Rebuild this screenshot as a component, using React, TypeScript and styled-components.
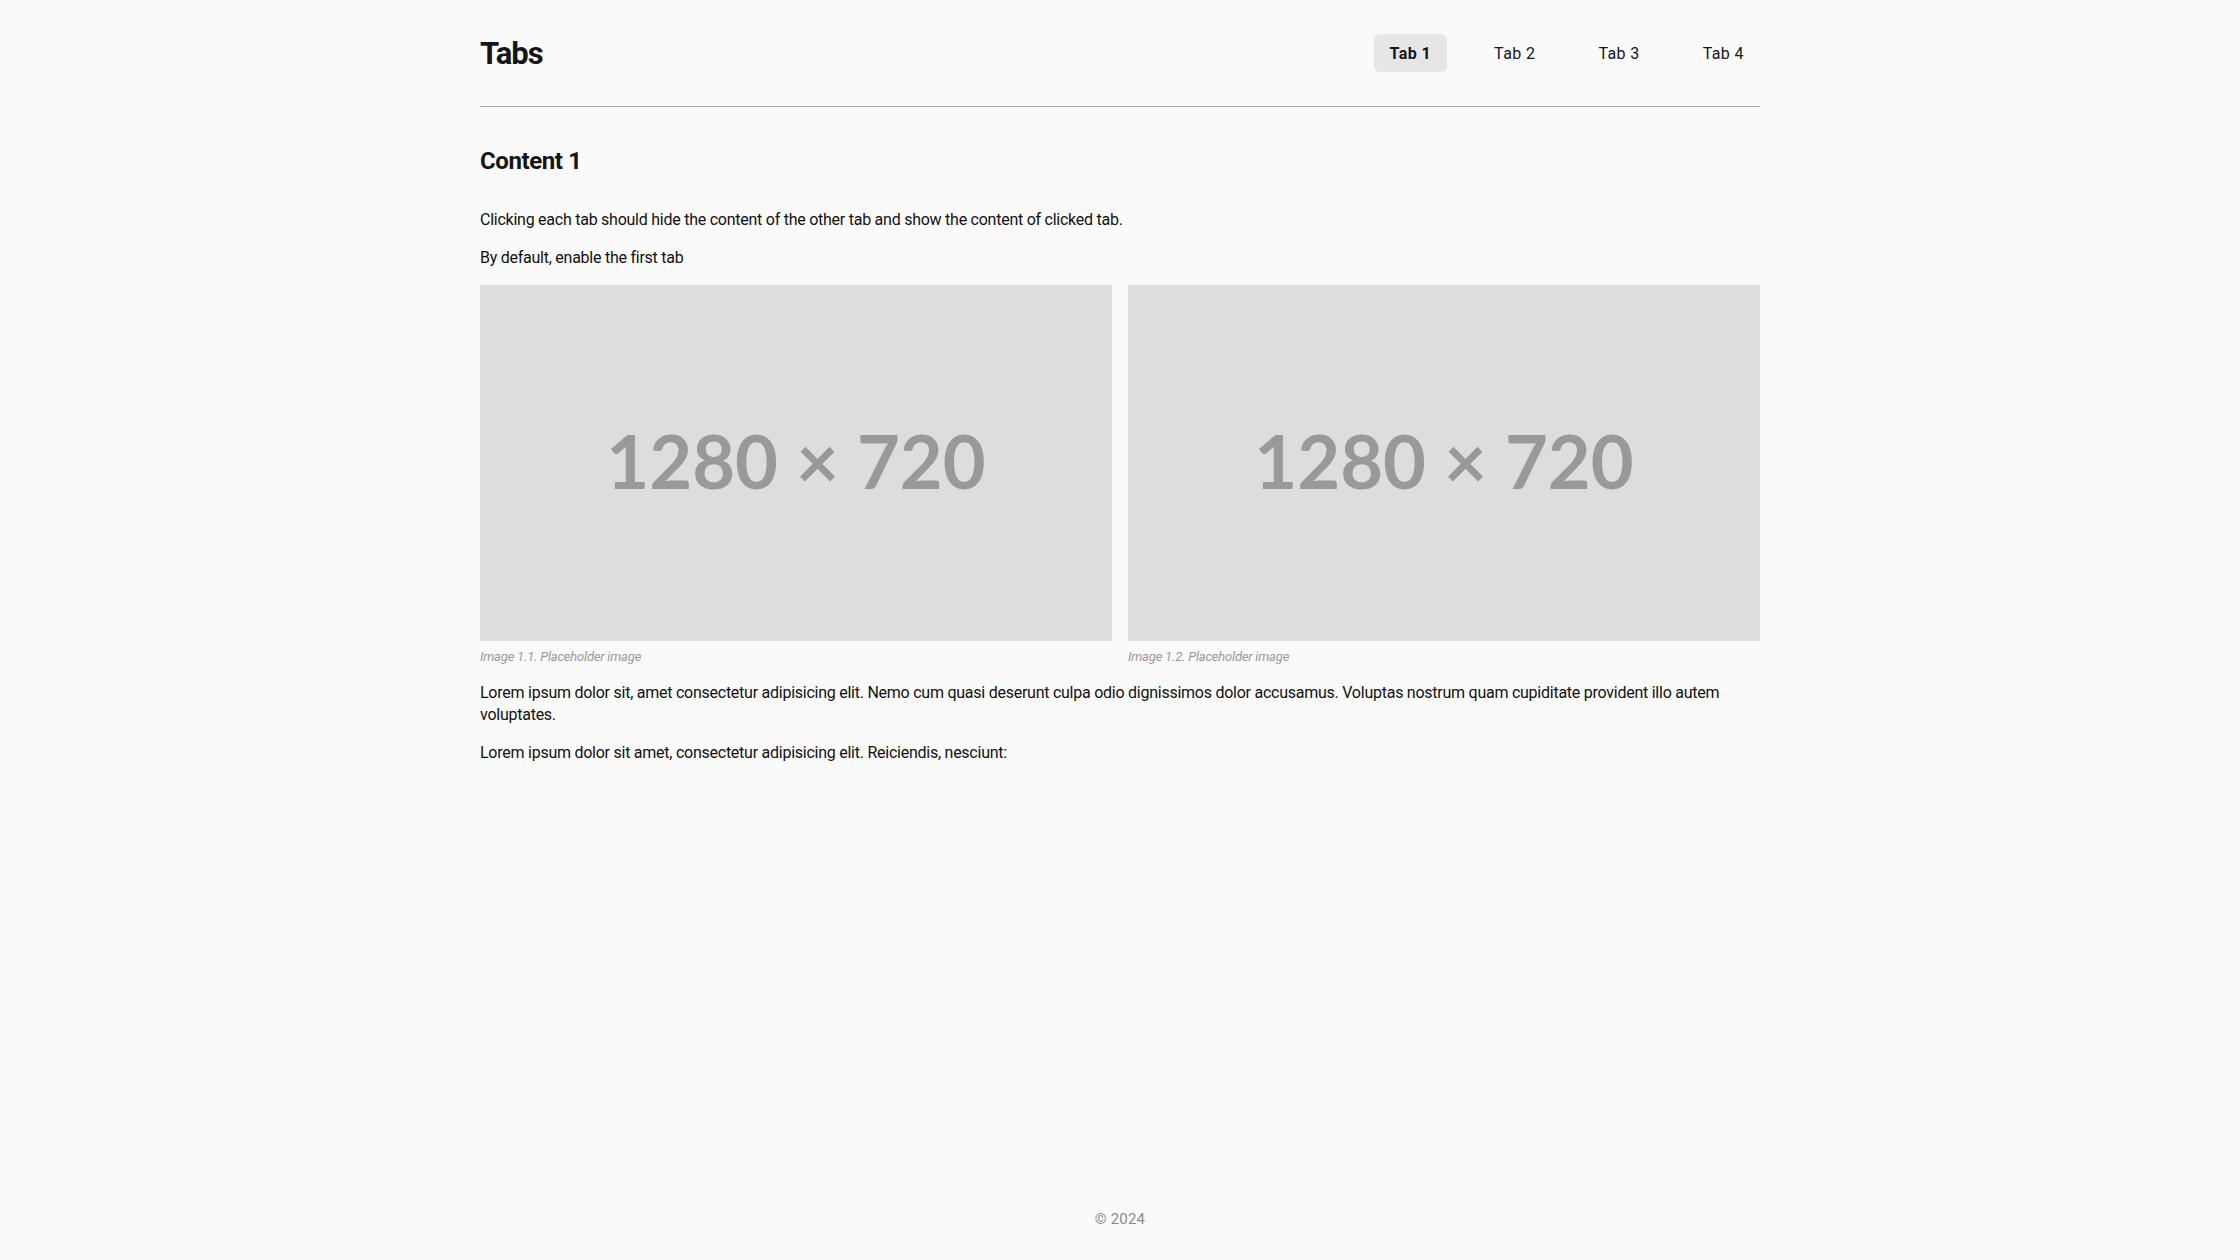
import React, { useState } from "react";
import styled, { createGlobalStyle } from "styled-components";

const GlobalStyle = createGlobalStyle`
  html, body {
    margin: 0;
    padding: 0;
    background: #fafafa;
  }
  body {
    font-family: Roboto, "Noto Sans", Arial, sans-serif;
    color: #111111;
  }
  * { box-sizing: border-box; }
`;

const Page = styled.div`
  min-height: 100vh;
  display: flex;
  flex-direction: column;
`;

const Container = styled.div`
  width: 1280px;
  margin: 0 auto;
`;

const Header = styled.header`
  display: flex;
  align-items: center;
  justify-content: space-between;
  padding: 34px 0;
  border-bottom: 1px solid #a8a8a8;
`;

const Title = styled.h1`
  margin: 0;
  font-size: 31px;
  line-height: 38px;
  font-weight: 700;
  letter-spacing: -1.1px;
  color: #151515;
  transform: translateY(1px);
`;

const TabList = styled.nav`
  display: flex;
  gap: 31px;
`;

const TabButton = styled.button<{ $active: boolean }>`
  height: 38px;
  padding: 0 16px;
  border: none;
  border-radius: 6px;
  background: ${(p) => (p.$active ? "#e6e6e6" : "transparent")};
  font-family: Roboto, "Noto Sans", Arial, sans-serif;
  font-size: 16px;
  letter-spacing: 0.4px;
  font-weight: ${(p) => (p.$active ? 700 : 400)};
  color: #151515;
  cursor: pointer;
`;

const Main = styled.main`
  flex: 1;
`;

const Heading = styled.h2`
  margin: 39px 0 33px;
  font-size: 24px;
  line-height: 30px;
  font-weight: 700;
  letter-spacing: -0.4px;
  color: #151515;
`;

const Text = styled.p`
  margin: 0 0 16px;
  font-size: 16px;
  line-height: 22px;
  letter-spacing: -0.25px;
`;

const Gallery = styled.div`
  display: grid;
  grid-template-columns: 1fr 1fr;
  gap: 16px;
  margin: 3px 0 16px;
`;

const Figure = styled.figure`
  margin: 0;
  display: flex;
  flex-direction: column;
  gap: 7px;
`;

const Placeholder = styled.div`
  height: 356px;
  padding-bottom: 5px;
  background: #dddddd;
  display: flex;
  align-items: center;
  justify-content: center;
  font-family: Lato, sans-serif;
  font-weight: 700;
  font-size: 74px;
  color: #999999;
`;

const Caption = styled.figcaption`
  font-size: 13px;
  line-height: 18px;
  font-style: italic;
  color: #999999;
  letter-spacing: -0.2px;
`;

const Footer = styled.footer`
  padding: 24px 0 31px;
  text-align: center;
  font-size: 15px;
  line-height: 20px;
  letter-spacing: 0.2px;
  color: #8a8a8a;
`;

const tabs = ["Tab 1", "Tab 2", "Tab 3", "Tab 4"];

export default function App() {
  const [active, setActive] = useState(0);
  return (
    <Page>
      <GlobalStyle />
      <Container>
        <Header>
          <Title>Tabs</Title>
          <TabList>
            {tabs.map((t, i) => (
              <TabButton key={t} $active={i === active} onClick={() => setActive(i)}>
                {t}
              </TabButton>
            ))}
          </TabList>
        </Header>
      </Container>
      <Main>
        <Container>
          <Heading>Content {active + 1}</Heading>
          <Text>Clicking each tab should hide the content of the other tab and show the content of clicked tab.</Text>
          <Text>By default, enable the first tab</Text>
          <Gallery>
            <Figure>
              <Placeholder>1280 × 720</Placeholder>
              <Caption>Image {active + 1}.1. Placeholder image</Caption>
            </Figure>
            <Figure>
              <Placeholder>1280 × 720</Placeholder>
              <Caption>Image {active + 1}.2. Placeholder image</Caption>
            </Figure>
          </Gallery>
          <Text>
            Lorem ipsum dolor sit, amet consectetur adipisicing elit. Nemo cum quasi deserunt culpa odio dignissimos dolor accusamus. Voluptas nostrum quam cupiditate provident illo autem voluptates.
          </Text>
          <Text>Lorem ipsum dolor sit amet, consectetur adipisicing elit. Reiciendis, nesciunt:</Text>
        </Container>
      </Main>
      <Footer>© 2024</Footer>
    </Page>
  );
}
